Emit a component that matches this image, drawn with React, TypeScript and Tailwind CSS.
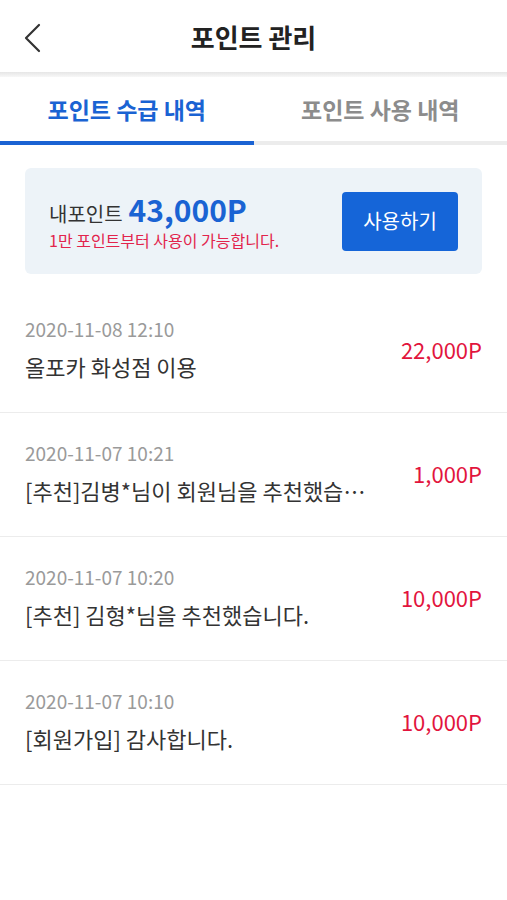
const rows = [
  { date: '2020-11-08 12:10', title: '올포카 화성점 이용', amount: '22,000P' },
  { date: '2020-11-07 10:21', title: '[추천]김병*님이 회원님을 추천했습니다.', amount: '1,000P' },
  { date: '2020-11-07 10:20', title: '[추천] 김형*님을 추천했습니다.', amount: '10,000P' },
  { date: '2020-11-07 10:10', title: '[회원가입] 감사합니다.', amount: '10,000P' },
]

export default function App() {
  return (
    <div className="min-h-[900px] w-[507px] bg-white font-['Noto_Sans_CJK_KR',_'Noto_Sans',_sans-serif]">
      {/* Header */}
      <header className="relative flex h-[72px] items-center justify-center">
        <button className="absolute left-[22px] top-[23px]">
          <svg width="20" height="30" viewBox="0 0 20 30" fill="none">
            <polyline points="17,2 4,15 17,28" stroke="#333" strokeWidth="2.2" strokeLinecap="round" strokeLinejoin="round" />
          </svg>
        </button>
        <h1 className="text-[26px] font-bold text-[#222]">포인트 관리</h1>
      </header>
      <div className="h-[5px] bg-gradient-to-b from-[#e6e6e6] to-[#f7f7f7]" />

      {/* Tabs */}
      <div className="flex">
        <div className="flex h-[68px] flex-1 flex-col">
          <div className="flex flex-1 items-center justify-center text-[23px] font-bold text-[#1a63d3]">
            포인트 수급 내역
          </div>
          <div className="h-[4px] bg-[#1a63d3]" />
        </div>
        <div className="flex h-[68px] flex-1 flex-col">
          <div className="flex flex-1 items-center justify-center text-[23px] font-bold text-[#8c8c8c]">
            포인트 사용 내역
          </div>
          <div className="h-[4px] bg-[#ececec]" />
        </div>
      </div>

      {/* My points card */}
      <div className="px-[25px] pt-[23px] pb-[15px]">
        <div className="flex h-[106px] items-center justify-between rounded-[6px] bg-[#edf3f8] pl-[24px] pr-[24px]">
          <div>
            <div className="flex items-baseline gap-[6px]">
              <span className="text-[20px] text-[#333]">내포인트</span>
              <span className="text-[30px] font-bold leading-[34px] text-[#1a63d3]">43,000P</span>
            </div>
            <div className="text-[16px] leading-[22px] text-[#e2244c]">1만 포인트부터 사용이 가능합니다.</div>
          </div>
          <button className="h-[59px] w-[116px] rounded-[4px] bg-[#1565d8] text-[20px] text-white">사용하기</button>
        </div>
      </div>

      {/* History list */}
      <ul>
        {rows.map((r, i) => (
          <li
            key={i}
            className="flex items-center justify-between border-b border-[#ececec] px-[25px] pt-[28px] pb-[31px]"
          >
            <div className="min-w-0 max-w-[345px]">
              <div className="text-[19px] leading-[24px] text-[#9a9a9a]">{r.date}</div>
              <div className="mt-[10px] truncate text-[22px] leading-[30px] text-[#333]">{r.title}</div>
            </div>
            <div className="shrink-0 text-[22px] text-[#e2143d]">{r.amount}</div>
          </li>
        ))}
      </ul>
    </div>
  )
}
